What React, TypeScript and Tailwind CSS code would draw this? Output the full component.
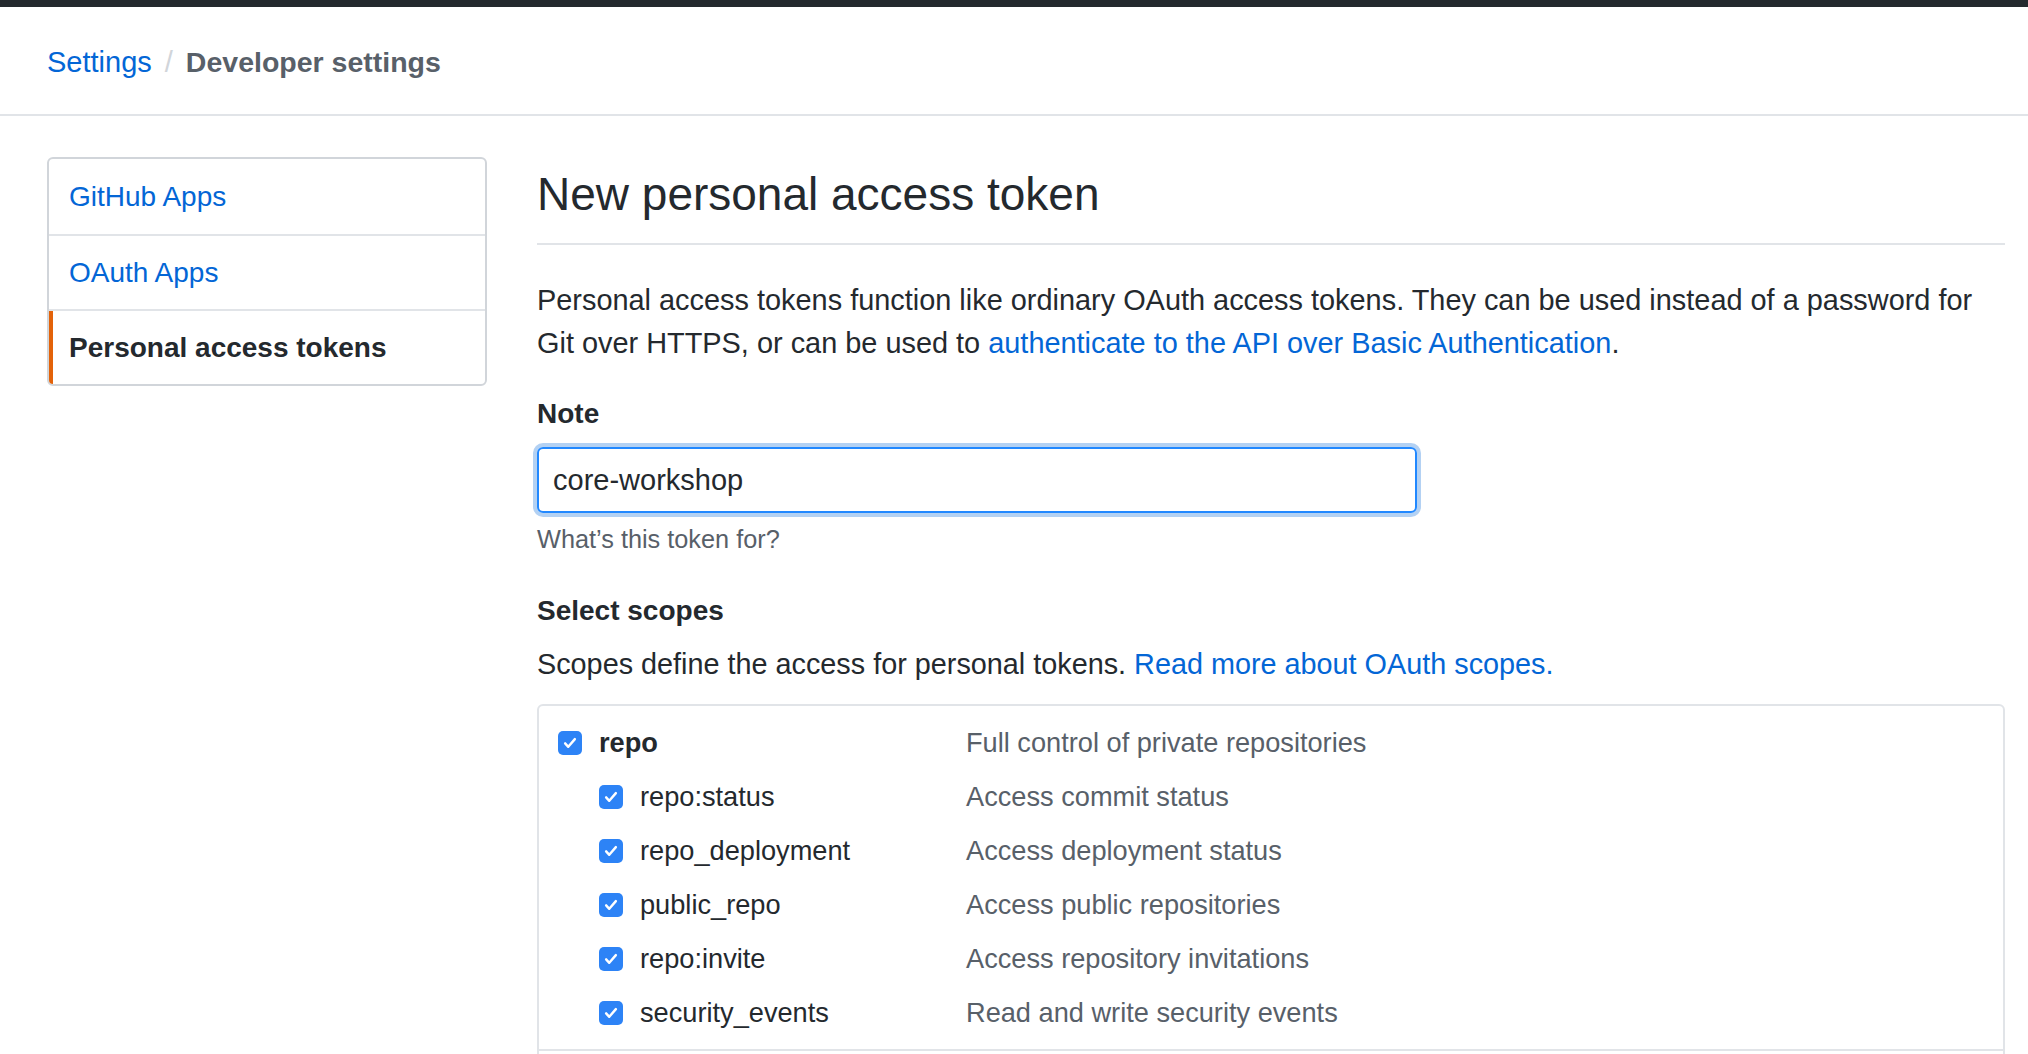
const menu = [
  { label: 'GitHub Apps', active: false },
  { label: 'OAuth Apps', active: false },
  { label: 'Personal access tokens', active: true },
]

const groups = [
  [
    { name: 'repo', desc: 'Full control of private repositories', child: false },
    { name: 'repo:status', desc: 'Access commit status', child: true },
    { name: 'repo_deployment', desc: 'Access deployment status', child: true },
    { name: 'public_repo', desc: 'Access public repositories', child: true },
    { name: 'repo:invite', desc: 'Access repository invitations', child: true },
    { name: 'security_events', desc: 'Read and write security events', child: true },
  ],
  [{ name: 'workflow', desc: 'Update GitHub Action workflows', child: false }],
  [
    { name: 'write:packages', desc: 'Upload packages to GitHub Package Registry', child: false },
    { name: 'read:packages', desc: 'Download packages from GitHub Package Registry', child: true },
  ],
]

function Check() {
  return (
    <span className="flex h-[24px] w-[24px] shrink-0 items-center justify-center rounded-[5px] bg-[#2d83f6]">
      <svg viewBox="0 0 24 24" className="h-[18px] w-[18px]" fill="none" stroke="white" strokeWidth={3.2} strokeLinecap="round" strokeLinejoin="round">
        <path d="M5.5 12.5l4.2 4.6L18.5 6.8" />
      </svg>
    </span>
  )
}

export default function App() {
  return (
    <div className="min-h-screen bg-white font-['Liberation_Sans',Arial,sans-serif] text-[#24292e]">
      {/* top strip */}
      <div className="h-[7px] bg-[#24292e]" />

      {/* breadcrumb */}
      <div className="flex h-[109px] items-center border-b-2 border-[#e1e4e8] px-[47px] pt-[4px]">
        <a className="text-[29px] text-[#0366d6]">Settings</a>
        <span className="mx-[13px] text-[29px] text-[#d1d5da]">/</span>
        <span className="text-[28.5px] font-bold text-[#586069]">Developer settings</span>
      </div>

      <div className="flex gap-[50px] pl-[47px] pr-[23px] pt-[41px]">
        {/* sidebar */}
        <nav className="w-[440px] shrink-0 self-start overflow-hidden rounded-[6px] border-2 border-[#d1d5da]">
          {menu.map((item, i) => (
            <div
              key={item.label}
              className={`relative flex h-[75px] items-center px-5 text-[28px] ${i > 0 ? 'border-t-2 border-[#e1e4e8]' : ''} ${item.active ? 'font-bold text-[#24292e]' : 'text-[#0366d6]'}`}
            >
              {item.active && <span className="absolute inset-y-0 left-0 w-[4px] bg-[#e36209]" />}
              {item.label}
            </div>
          ))}
        </nav>

        {/* main */}
        <main className="min-w-0 flex-1">
          <h1 className="border-b-2 border-[#e1e4e8] pb-[20px] pt-[8px] text-[46px] font-normal leading-[58px]">
            New personal access token
          </h1>

          <p className="mt-[34px] text-[28.9px] leading-[43px]">
            Personal access tokens function like ordinary OAuth access tokens. They can be used instead of a password for Git over HTTPS, or can be used to{' '}
            <a className="text-[#0366d6]">authenticate to the API over Basic Authentication</a>.
          </p>

          <div className="mt-[29px] text-[28px] font-bold leading-[40px]">Note</div>
          <input
            readOnly
            value="core-workshop"
            className="mt-[13px] h-[66px] w-[880px] rounded-[6px] border-2 border-[#2188ff] px-[14px] text-[29px] text-[#24292e] shadow-[0_0_0_4px_rgba(3,102,214,0.3)] outline-none"
          />
          <div className="mt-[8px] text-[25.3px] leading-[36px] text-[#586069]">What’s this token for?</div>

          <div className="mt-[34px] text-[28px] font-bold leading-[40px]">Select scopes</div>
          <p className="mt-[12px] text-[28.8px] leading-[43px]">
            Scopes define the access for personal tokens. <a className="text-[#0366d6]">Read more about OAuth scopes.</a>
          </p>

          <div className="mt-[18px] rounded-t-[6px] border-2 border-[#e1e4e8]">
            {groups.map((group, gi) => (
              <div key={gi} className={`pb-[9px] pt-[10px] ${gi > 0 ? 'border-t-2 border-[#e1e4e8]' : ''}`}>
                {group.map((s) => (
                  <div key={s.name} className="flex h-[54px] items-center text-[27.2px]">
                    <div className={`flex w-[427px] shrink-0 items-center gap-[17px] ${s.child ? 'pl-[60px]' : 'pl-[19px]'}`}>
                      <Check />
                      <span className={s.child ? '' : 'font-bold'}>{s.name}</span>
                    </div>
                    <span className="text-[#586069]">{s.desc}</span>
                  </div>
                ))}
              </div>
            ))}
          </div>
        </main>
      </div>
    </div>
  )
}
